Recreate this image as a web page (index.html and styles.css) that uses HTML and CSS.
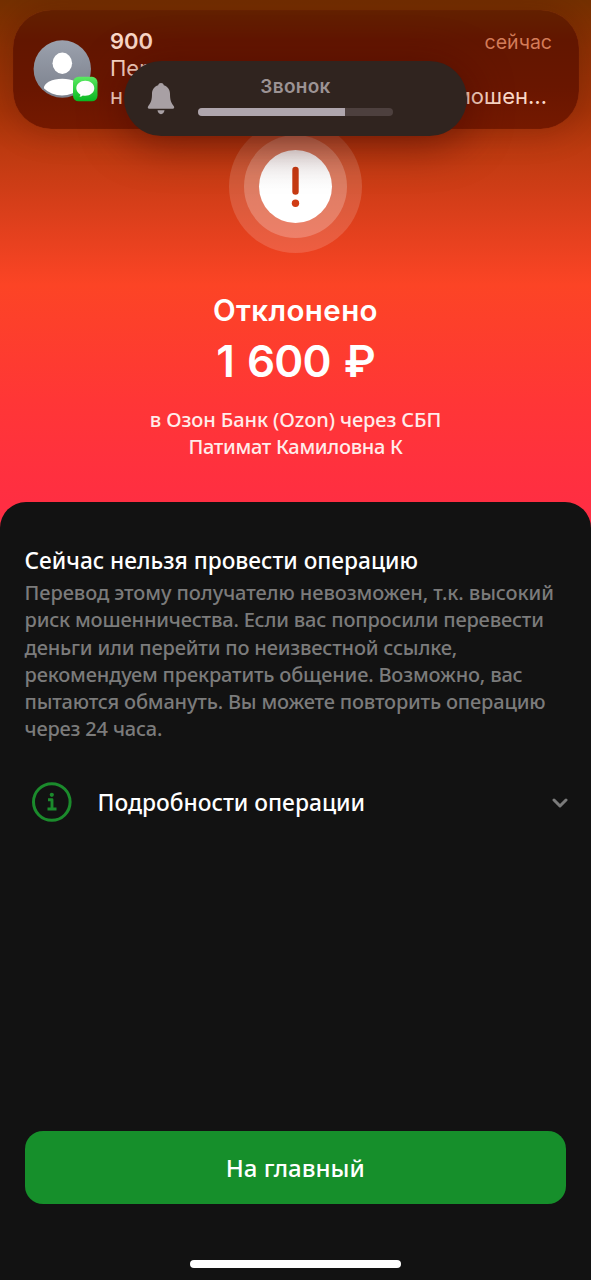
FILE: index.html
```html
<!DOCTYPE html>
<html lang="ru">
<head>
<meta charset="utf-8">
<title>Отклонено</title>
<link rel="stylesheet" href="styles.css">
</head>
<body>
<main class="screen">
  <section class="hero">
    <svg class="alert" width="134" height="134" viewBox="0 0 134 134">
      <defs><linearGradient id="disc" x1="0" y1="0" x2="0" y2="1"><stop offset="0" stop-color="#f6f6f6"/><stop offset=".55" stop-color="#fff"/></linearGradient></defs>
      <circle cx="67.500" cy="66.500" r="66.500" fill="#fff" fill-opacity=".15"/>
      <circle cx="67.500" cy="66.500" r="51.500" fill="#fff" fill-opacity=".22"/>
      <circle cx="67.500" cy="66.500" r="36.500" fill="url(#disc)"/>
      <path d="M67.500 50v21.500" stroke="#c63a12" stroke-width="6.400" stroke-linecap="round"/>
      <circle cx="67.500" cy="83.200" r="3.700" fill="#d03c14"/>
    </svg>
    <h1 class="status"><span>Отклонено</span></h1>
    <p class="amount"><span>1 600 ₽</span></p>
    <p class="recipient"><span class="bank">в Озон Банк (Ozon) через СБП</span><br><span class="person">Патимат Камиловна К</span></p>
  </section>
  <section class="sheet">
    <h2 class="sheet-title"><span>Сейчас нельзя провести операцию</span></h2>
    <p class="reason"><span class="first">Перевод этому получателю невозможен, т.к. высокий</span><br><span>риск мошенничества. Если вас попросили перевести</span><br><span>деньги или перейти по неизвестной ссылке,</span><br><span>рекомендуем прекратить общение. Возможно, вас</span><br><span>пытаются обмануть. Вы можете повторить операцию</span><br><span>через 24 часа.</span></p>
    <div class="details">
      <svg width="40" height="40" viewBox="0 0 40 40" fill="none" stroke="#1b8b2c">
        <circle cx="19.800" cy="20" r="18.300" stroke-width="3"/>
        <path d="M16 17.700h4v9M15.500 27h9" stroke-width="2.900" stroke-linejoin="round"/>
        <circle cx="19.800" cy="12.800" r="2.100" fill="#1b8b2c" stroke="none"/>
      </svg>
      <span class="details-label">Подробности операции</span>
      <svg class="chevron" width="16" height="12" viewBox="0 0 16 12" fill="none" stroke="#7b7b7b" stroke-width="3" stroke-linecap="round" stroke-linejoin="round"><path d="M2 4l6 6 6-6"/></svg>
    </div>
    <button class="home-button"><span>На главный</span></button>
    <div class="home-indicator"></div>
  </section>
  <aside class="notification">
    <div class="avatar">
      <svg width="66" height="64" viewBox="0 0 66 64">
        <defs>
          <linearGradient id="face" x1="0" y1="0" x2="0" y2="1"><stop offset="0" stop-color="#9ba1ad"/><stop offset="1" stop-color="#7b808c"/></linearGradient>
          <linearGradient id="msg" x1="0" y1="0" x2="0" y2="1"><stop offset="0" stop-color="#5cec63"/><stop offset="1" stop-color="#08b921"/></linearGradient>
          <clipPath id="round"><circle cx="29" cy="29" r="26.500"/></clipPath>
        </defs>
        <circle cx="29.300" cy="29" r="28.700" fill="url(#face)"/>
        <ellipse cx="29.300" cy="23.300" rx="9.800" ry="10.700" fill="#fff"/>
        <ellipse cx="29.300" cy="48.500" rx="18.500" ry="9.800" fill="#fff" clip-path="url(#round)"/>
        <rect x="40" y="36.800" width="24.500" height="24.500" rx="5.500" fill="url(#msg)"/>
        <path d="M52.300 40.800c5 0 9 3.300 9 7.400s-4 7.500-9 7.500c-.9 0-1.700-.1-2.500-.3-.9.800-2 1.300-3.300 1.400.6-.7.900-1.500.9-2.400-2.500-1.400-4.100-3.600-4.100-6.200 0-4.100 4-7.400 9-7.400z" fill="#fff"/>
      </svg>
    </div>
    <div class="message">
      <div class="row"><b class="sender">900</b><span class="time">сейчас</span></div>
      <div class="row"><span>Пер</span></div>
      <div class="row"><span>н</span><span class="tail">мошен…</span></div>
    </div>
  </aside>
  <aside class="volume">
    <svg width="28" height="32" viewBox="0 0 28 32" fill="#a8a0a4"><path d="M14 0c1.500 0 2.500.9 2.800 2.200 4 1.200 6.200 4.400 6.200 8.800 0 5.800 1 8.700 3.700 12 .9 1.200.7 2.800-1 2.800H2.300c-1.700 0-1.900-1.600-1-2.800C4 19.700 5 16.800 5 11c0-4.400 2.200-7.600 6.200-8.800C11.500.9 12.500 0 14 0z"/><path d="M10.500 27.300h7c-.3 2.300-1.600 3.900-3.500 3.900s-3.200-1.600-3.500-3.900z"/></svg>
    <div class="level">
      <span class="level-label">Звонок</span>
      <div class="track"><div class="fill" style="width:75.5%"></div></div>
    </div>
  </aside>
</main>
</body>
</html>
```
FILE: styles.css
```css
* { box-sizing: border-box; margin: 0; padding: 0; }
body { background: #121212; font-family: "Noto Sans", sans-serif; color: #fff; }
.screen { position: relative; width: 591px; height: 1280px; overflow: hidden; display: flex; flex-direction: column; background: linear-gradient(#743000 0, #8f3204 50px, #a63408 110px, #bd3a10 150px, #db3f1b 215px, #fc4425 285px, #ff3636 400px, #ff2e42 502px, #ff2e46 530px); }
.hero { height: 502px; padding-top: 120px; text-align: center; white-space: nowrap; }
.alert { display: block; margin: 0 228px; }
.status { margin-top: 36px; font: 600 29.500px/40px Inter, sans-serif; letter-spacing: .4px; }
.amount { margin-top: 1px; font: 600 44px/60px Inter, sans-serif; letter-spacing: -.9px; word-spacing: 3px; }
.recipient { margin-top: 15px; font-size: 20px; font-weight: 500; line-height: 27px; color: #ffecea; }
.bank { letter-spacing: -.1px; }
.person { letter-spacing: -.3px; }
.sheet { height: 778px; padding: 44px 25px 0 24.500px; background: #121212; border-radius: 26px 26px 0 0; display: flex; flex-direction: column; white-space: nowrap; }
.sheet-title { font-size: 22.700px; font-weight: 500; line-height: 30px; }
.reason { margin-top: 3px; font-size: 20px; font-weight: 500; line-height: 27.250px; letter-spacing: -.18px; color: #7b7b7b; }
.first { letter-spacing: -.08px; }
.details { margin: 39px -2px 0 7px; height: 40px; display: flex; align-items: center; }
.details-label { margin-left: 26px; padding-top: 2px; font-size: 22.800px; font-weight: 500; }
.chevron { margin-left: auto; }
.home-button { margin-top: auto; height: 73px; flex: none; border: 0; border-radius: 18px; background: #168f2b; color: #fff; font: 500 24px/72px "Noto Sans", sans-serif; }
.home-indicator { width: 211px; height: 8px; flex: none; margin: 56px auto 12px; border-radius: 4px; background: #fff; }
.notification { position: absolute; left: 13px; top: 10px; width: 566px; height: 119px; border-radius: 38px; padding: 17px 27px 0 20px; display: flex; background: linear-gradient(#622000 0, #621600 25%, #691600 65%, #751900 100%); box-shadow: 0 0 34px rgba(60,10,0,.3), inset 0 0 1px rgba(220,100,50,.35); font-family: Inter, sans-serif; color: #fbd9c8; }
.avatar { padding-top: 13px; width: 66px; }
.message { flex: 1; margin-left: 11px; font-size: 22px; }
.row { display: flex; justify-content: space-between; height: 27.300px; line-height: 28px; }
.sender { font-weight: 600; font-size: 22px; }
.time { font-size: 19.500px; line-height: 31px; color: #d47c58; }
.tail { margin-right: 5px; }
.volume { position: absolute; left: 124px; top: 61px; width: 343px; height: 75px; border-radius: 38px; padding: 22px 74px 0 23px; display: flex; background: #30241f; box-shadow: 0 6px 44px rgba(70,8,0,.6); }
.level { flex: 1; margin: -9px 0 0 23px; display: flex; flex-direction: column; align-items: center; }
.level-label { font: 600 19px/26px Inter, sans-serif; letter-spacing: .3px; color: #9c9394; }
.track { width: 100%; height: 8px; margin-top: 8px; border-radius: 4px; overflow: hidden; background: #4d403e; }
.fill { height: 8px; background: #afa6ad; }
```
